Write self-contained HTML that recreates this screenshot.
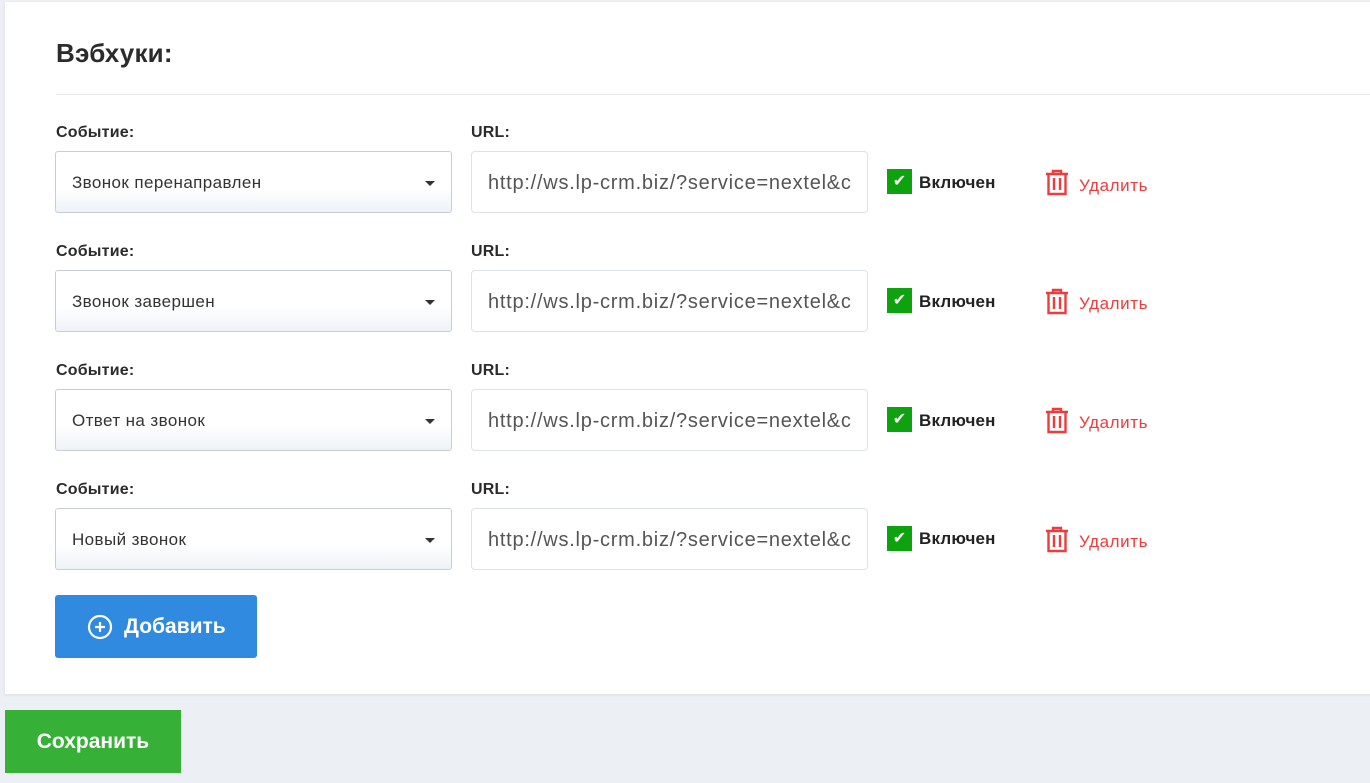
<!DOCTYPE html>
<html><head><meta charset="utf-8"><style>
*{box-sizing:border-box;margin:0;padding:0}
body{width:1370px;height:783px;background:#eceff4;font-family:"Liberation Sans","DejaVu Sans",sans-serif;position:relative;overflow:hidden;color:#2b2b2b}
.card{position:absolute;left:5px;top:2px;width:1370px;height:692px;background:#fff;box-shadow:0 1px 3px rgba(0,0,0,.08)}
h1{position:absolute;left:56px;top:38px;font-size:26px;font-weight:bold;color:#2b2b2b;letter-spacing:.2px}
.hr{position:absolute;left:56px;top:94px;width:1314px;height:1px;background:#e8e8e8}
.lbl{position:absolute;font-size:16px;font-weight:bold;color:#2b2b2b;letter-spacing:.2px}
.sel{position:absolute;left:55px;width:397px;height:62px;border:1px solid #c9ced6;border-radius:3px;background:linear-gradient(#fff 60%,#eef2f7);font-size:17px;padding-left:16px;line-height:62px;color:#333;letter-spacing:.4px}
.sel:after{content:"";position:absolute;right:16px;top:29px;border-left:5px solid transparent;border-right:5px solid transparent;border-top:5px solid #333}
.url{position:absolute;left:471px;width:397px;height:62px;border:1px solid #dfe2e6;border-radius:4px;font-size:20px;padding-left:16px;line-height:62px;color:#555;overflow:hidden;white-space:nowrap;letter-spacing:.75px}
.cb{position:absolute;left:887px;width:25px;height:25px;background:#0ea30e;color:#fff;text-align:center;font-size:16px;line-height:25px;font-weight:bold}
.on{position:absolute;left:919px;font-size:17px;font-weight:bold;color:#222;letter-spacing:.2px}
.del{position:absolute;left:1079px;font-size:17px;color:#ee3b3b;letter-spacing:.6px}
.tr{position:absolute;left:1045px}
.add{position:absolute;left:55px;top:595px;width:202px;height:63px;background:#2f8ae0;border-radius:3px;color:#fff;font-size:21px;font-weight:bold;line-height:63px;padding-left:69px}
.add svg{position:absolute;left:32px;top:19px}
.save{position:absolute;left:5px;top:710px;width:176px;height:63px;background:#36b037;color:#fff;font-size:21px;font-weight:bold;line-height:63px;text-align:center}
</style></head><body>
<div class="card"></div>
<h1>Вэбхуки:</h1>
<div class="hr"></div>
<div class="lbl" style="left:56px;top:124px">Событие:</div><div class="lbl" style="left:471px;top:124px">URL:</div>
<div class="sel" style="top:151px">Звонок перенаправлен</div><div class="url" style="top:151px">http://ws.lp-crm.biz/?service=nextel&amp;c</div>
<div class="cb" style="top:169px">✔</div><div class="on" style="top:173px">Включен</div>
<svg class="tr" style="top:169px" width="24" height="27" viewBox="0 0 24 27"><path d="M1 5h22M8 5V2h8v3M3.5 5v20h17V5M9 9v12M15 9v12" fill="none" stroke="#ee3b3b" stroke-width="2.4"/></svg><div class="del" style="top:176px">Удалить</div>

<div class="lbl" style="left:56px;top:243px">Событие:</div><div class="lbl" style="left:471px;top:243px">URL:</div>
<div class="sel" style="top:270px">Звонок завершен</div><div class="url" style="top:270px">http://ws.lp-crm.biz/?service=nextel&amp;c</div>
<div class="cb" style="top:288px">✔</div><div class="on" style="top:292px">Включен</div>
<svg class="tr" style="top:288px" width="24" height="27" viewBox="0 0 24 27"><path d="M1 5h22M8 5V2h8v3M3.5 5v20h17V5M9 9v12M15 9v12" fill="none" stroke="#ee3b3b" stroke-width="2.4"/></svg><div class="del" style="top:294px">Удалить</div>

<div class="lbl" style="left:56px;top:362px">Событие:</div><div class="lbl" style="left:471px;top:362px">URL:</div>
<div class="sel" style="top:389px">Ответ на звонок</div><div class="url" style="top:389px">http://ws.lp-crm.biz/?service=nextel&amp;c</div>
<div class="cb" style="top:407px">✔</div><div class="on" style="top:411px">Включен</div>
<svg class="tr" style="top:407px" width="24" height="27" viewBox="0 0 24 27"><path d="M1 5h22M8 5V2h8v3M3.5 5v20h17V5M9 9v12M15 9v12" fill="none" stroke="#ee3b3b" stroke-width="2.4"/></svg><div class="del" style="top:413px">Удалить</div>

<div class="lbl" style="left:56px;top:481px">Событие:</div><div class="lbl" style="left:471px;top:481px">URL:</div>
<div class="sel" style="top:508px">Новый звонок</div><div class="url" style="top:508px">http://ws.lp-crm.biz/?service=nextel&amp;c</div>
<div class="cb" style="top:526px">✔</div><div class="on" style="top:529px">Включен</div>
<svg class="tr" style="top:526px" width="24" height="27" viewBox="0 0 24 27"><path d="M1 5h22M8 5V2h8v3M3.5 5v20h17V5M9 9v12M15 9v12" fill="none" stroke="#ee3b3b" stroke-width="2.4"/></svg><div class="del" style="top:532px">Удалить</div>

<div class="add"><svg width="26" height="26" viewBox="0 0 26 26"><circle cx="13" cy="13" r="11" fill="none" stroke="#fff" stroke-width="2.2"/><path d="M13 8v10M8 13h10" stroke="#fff" stroke-width="2.2"/></svg>Добавить</div>
<div class="save">Сохранить</div>
</body></html>
